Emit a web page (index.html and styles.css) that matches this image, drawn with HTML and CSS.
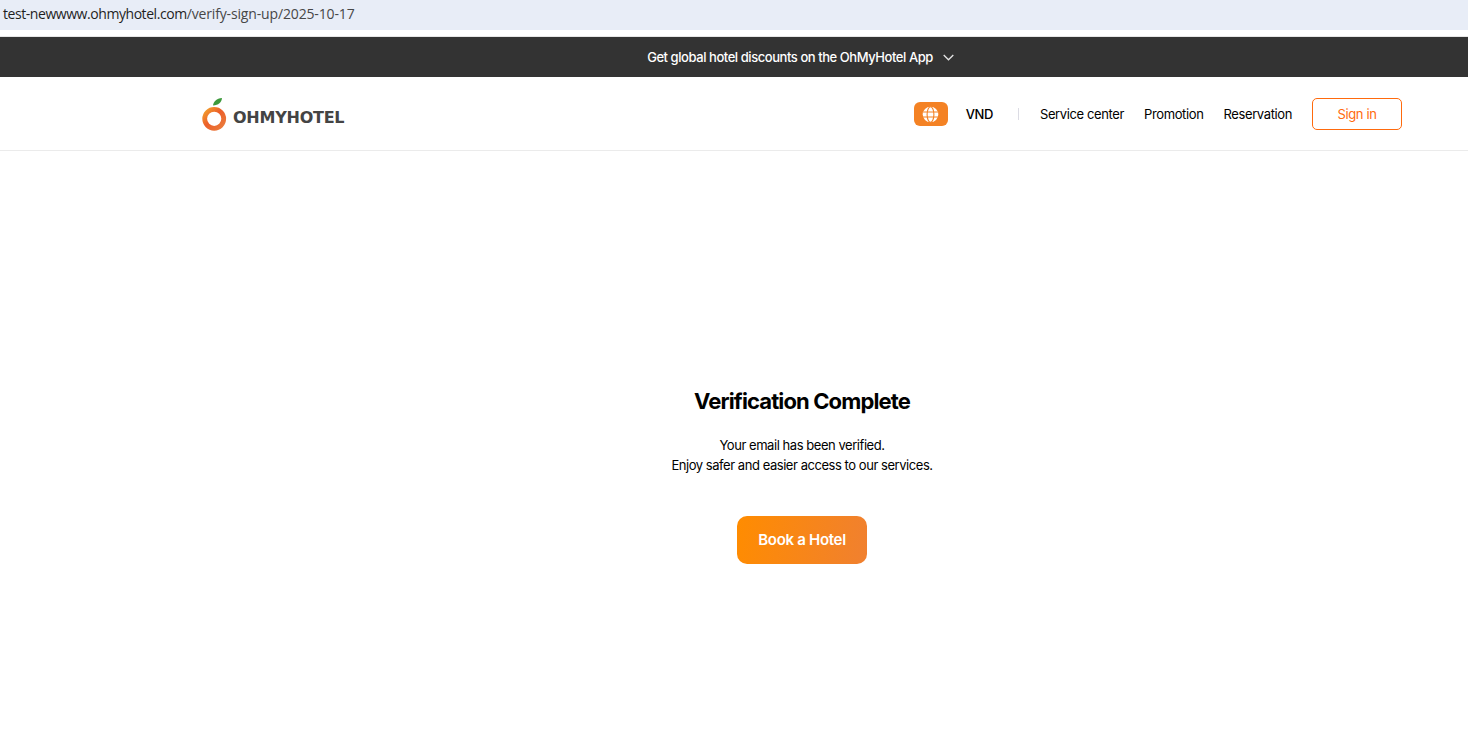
FILE: index.html
```html
<!DOCTYPE html>
<html lang="en">
<head>
<meta charset="utf-8">
<title>Verification Complete</title>
<link rel="stylesheet" href="styles.css">
</head>
<body>
<div class="address-bar"><span class="host">test-newwww.ohmyhotel.com</span><span class="path">/verify-sign-up/2025-10-17</span></div>
<div class="address-gap"></div>
<div class="promo">
  <div class="promo-inner">
    <span>Get global hotel discounts on the OhMyHotel App</span>
    <svg class="chevron" width="11" height="7" viewBox="0 0 11 7" fill="none"><path d="M0.700 1 5.500 5.800 10.300 1" stroke="#e4e4e4" stroke-width="1.300"/></svg>
  </div>
</div>
<header class="site-header">
  <div class="container header-row">
    <a class="logo">
      <svg class="logo-mark" width="25" height="34" viewBox="0 0 25 34" fill="none">
        <defs><linearGradient id="ring" x1="0" y1="0" x2="1" y2="1"><stop offset="0" stop-color="#f2a02c"/><stop offset="0.45" stop-color="#ec5f2a"/><stop offset="1" stop-color="#ea7c3c"/></linearGradient></defs>
        <circle cx="12.200" cy="21.800" r="9.500" stroke="url(#ring)" stroke-width="4.800"/>
        <path d="M11 8.500C11.500 4.500 14.500 1.500 20 1c-.4 4.500-3.500 7.200-9 7.500z" fill="#3d9a3c"/>
      </svg>
      <span class="logo-text">OHMYHOTEL</span>
    </a>
    <nav class="nav">
      <span class="globe-btn">
        <svg width="17" height="17" viewBox="0 0 17 17" fill="none"><circle cx="8.500" cy="8.500" r="7.800" fill="#fff"/><g stroke="#f48224" stroke-width="1.100"><ellipse cx="8.500" cy="8.500" rx="3.400" ry="7.800"/><path d="M1 6h15M1 11h15"/></g></svg>
      </span>
      <span class="currency">VND</span>
      <span class="divider"></span>
      <a class="nav-link">Service center</a>
      <a class="nav-link">Promotion</a>
      <a class="nav-link">Reservation</a>
      <a class="sign-in">Sign in</a>
    </nav>
  </div>
</header>
<main class="container main">
  <h1 class="title">Verification Complete</h1>
  <p class="message">Your email has been verified.<br>Enjoy safer and easier access to our services.</p>
  <a class="book">Book a Hotel</a>
</main>
</body>
</html>
```
FILE: styles.css
```css
* { box-sizing: border-box; }
html, body { margin: 0; height: 100%; }
body { background: #fff; color: #000; font-family: Inter, "Liberation Sans", sans-serif; overflow: hidden; }
.address-bar { height: 30px; background: #e8edf7; padding: 4px 0 0 3px; font: 14px/20px "Open Sans", "Noto Sans", sans-serif; white-space: nowrap; }
.host { color: #1f1f1f; letter-spacing: -0.44px; }
.path { color: #474747; letter-spacing: -0.15px; }
.address-gap { height: 7px; background: #fff; border-bottom: 1px solid #e6e6e6; }
.promo { height: 40px; background: #333; color: #fff; display: flex; justify-content: center; align-items: center; font-size: 13px; font-weight: 500; letter-spacing: -0.44px; padding-left: 133px; }
.promo-inner { display: flex; align-items: center; gap: 10px; }
.container { width: 1200px; margin-left: 202px; }
.site-header { height: 74px; border-bottom: 1px solid #ebebeb; }
.header-row { height: 73px; display: flex; justify-content: space-between; align-items: flex-start; }
.logo { display: flex; align-items: flex-end; margin-top: 20px; height: 34px; }
.logo-mark { display: block; margin-right: 6px; }
.logo-text { font-family: "DejaVu Sans", sans-serif; font-weight: 700; font-size: 16px; line-height: 14px; letter-spacing: -0.25px; color: #444; margin-bottom: 6px; }
.nav { display: flex; align-items: center; height: 32px; margin-top: 21px; font-size: 13px; letter-spacing: -0.38px; }
.globe-btn { width: 34px; height: 24px; border-radius: 6px; background: #f48224; display: flex; align-items: center; justify-content: center; margin-right: 18px; }
.currency { font-weight: 500; margin-right: 25px; }
.divider { width: 1px; height: 12px; background: #dcdce4; margin-right: 21px; }
.nav-link { margin-right: 20px; color: #000; }
.sign-in { width: 90px; height: 32px; border: 1px solid #ff6a0d; border-radius: 5px; color: #ff6a0d; display: flex; align-items: center; justify-content: center; }
.main { display: flex; flex-direction: column; align-items: center; padding-top: 235px; }
.title { margin: 0; font-size: 22px; line-height: 30px; font-weight: 700; letter-spacing: -0.88px; }
.message { margin: 19px 0 0; font-size: 13px; line-height: 20px; text-align: center; letter-spacing: -0.45px; }
.book { margin-top: 41px; width: 130px; height: 48px; padding-bottom: 2px; border-radius: 10px; background: linear-gradient(100deg, #ff8c00, #f08030); color: #fff; font-size: 15px; font-weight: 600; letter-spacing: -0.3px; display: flex; align-items: center; justify-content: center; }
```
